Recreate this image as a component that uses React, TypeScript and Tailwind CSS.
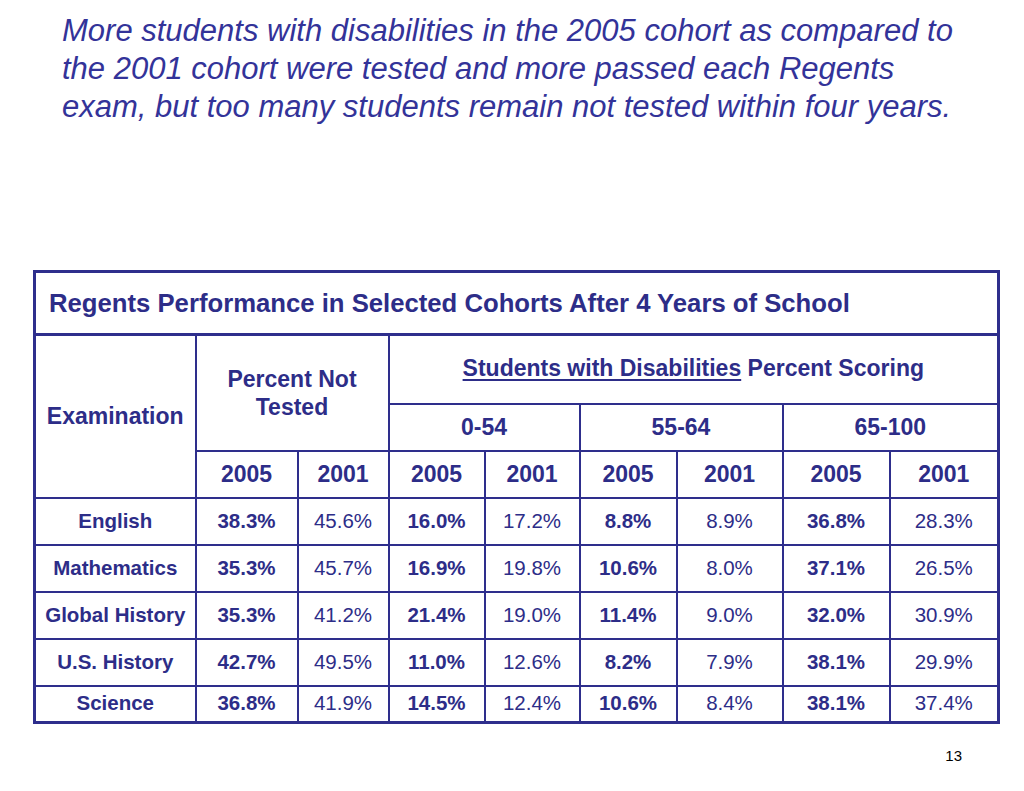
const rows = [
  { name: 'English', v: ['38.3%', '45.6%', '16.0%', '17.2%', '8.8%', '8.9%', '36.8%', '28.3%'] },
  { name: 'Mathematics', v: ['35.3%', '45.7%', '16.9%', '19.8%', '10.6%', '8.0%', '37.1%', '26.5%'] },
  { name: 'Global History', v: ['35.3%', '41.2%', '21.4%', '19.0%', '11.4%', '9.0%', '32.0%', '30.9%'] },
  { name: 'U.S. History', v: ['42.7%', '49.5%', '11.0%', '12.6%', '8.2%', '7.9%', '38.1%', '29.9%'] },
  { name: 'Science', v: ['36.8%', '41.9%', '14.5%', '12.4%', '10.6%', '8.4%', '38.1%', '37.4%'] },
];

const widths = [161, 102, 91, 96, 95, 97, 106, 107, 109];
const cell = 'border-2 border-[#2e2e8c] text-center p-0';

export default function App() {
  return (
    <div
      className="w-[1024px] h-[791px] bg-white text-[#2d2d88] flex flex-col"
      style={{ fontFamily: '"Liberation Sans", Arial, sans-serif' }}
    >
      <h1 className="pl-[62px] pt-[12px] text-[31px] leading-[38px] italic font-normal text-[#333399]">
        More students with disabilities in the 2005 cohort as compared to
        <br />
        the 2001 cohort were tested and more passed each Regents
        <br />
        exam, but too many students remain not tested within four years.
      </h1>

      <table className="ml-[33px] mt-[144px] w-[964px] table-fixed border-collapse border-[3px] border-[#2e2e8c]">
        <colgroup>
          {widths.map((w, i) => (
            <col key={i} style={{ width: w }} />
          ))}
        </colgroup>
        <tbody>
          <tr className="h-[63px]">
            <td colSpan={9} className="border-[3px] border-[#2e2e8c] text-left pl-[13px] text-[25.7px] font-bold">
              Regents Performance in Selected Cohorts After 4 Years of School
            </td>
          </tr>
          <tr className="h-[69px] text-[23px] font-bold leading-[28px]">
            <td rowSpan={3} className={cell}>
              Examination
            </td>
            <td rowSpan={2} colSpan={2} className={cell}>
              Percent Not
              <br />
              Tested
            </td>
            <td colSpan={6} className={cell + ' pb-[2px]'}>
              <span className="underline underline-offset-[3px] decoration-2">Students with Disabilities</span> Percent Scoring
            </td>
          </tr>
          <tr className="h-[47px] text-[23px] font-bold">
            <td colSpan={2} className={cell}>0-54</td>
            <td colSpan={2} className={cell}>55-64</td>
            <td colSpan={2} className={cell}>65-100</td>
          </tr>
          <tr className="h-[47px] text-[23px] font-bold">
            {['2005', '2001', '2005', '2001', '2005', '2001', '2005', '2001'].map((y, i) => (
              <td key={i} className={cell}>
                {y}
              </td>
            ))}
          </tr>
          {rows.map((r, ri) => (
            <tr key={r.name} className={(ri === rows.length - 1 ? 'h-[37px]' : 'h-[47px]') + ' text-[20.5px]'}>
              <td className={cell + ' font-bold'}>{r.name}</td>
              {r.v.map((v, i) => (
                <td key={i} className={cell + (i % 2 === 0 ? ' font-bold' : ' font-normal')}>
                  {v}
                </td>
              ))}
            </tr>
          ))}
        </tbody>
      </table>

      <div className="mt-auto mb-[24px] pr-[62px] text-right text-[15px] text-black">13</div>
    </div>
  );
}
